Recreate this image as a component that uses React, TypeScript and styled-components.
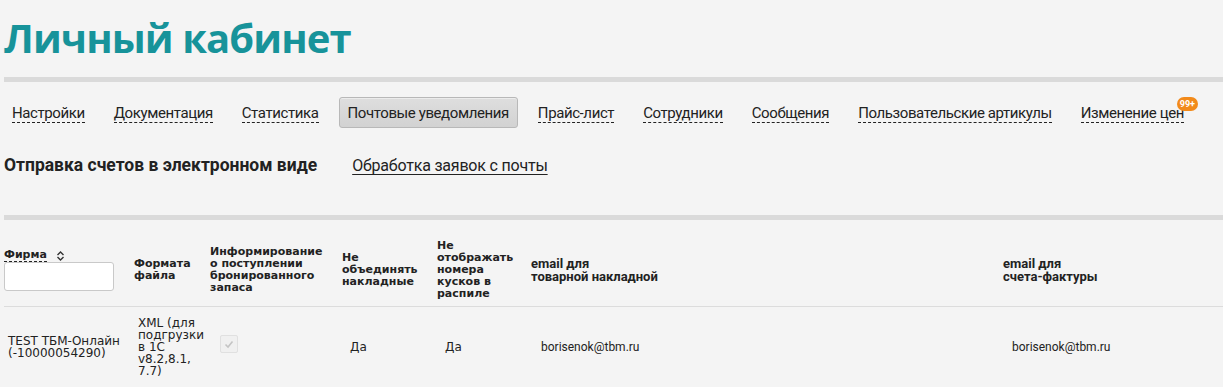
import styled, { createGlobalStyle } from 'styled-components'

const GlobalStyle = createGlobalStyle`
  html, body {
    margin: 0;
    padding: 0;
    background: #f4f4f4;
  }
`

const narrow = 'Roboto, "Liberation Sans Narrow", sans-serif'
const tahoma = '"DejaVu Sans", Tahoma, Verdana, sans-serif'

const Page = styled.div`
  padding: 0 0 0 4px;
  width: 1219px;
  overflow: hidden;
  font-family: ${tahoma};
  color: #222;
`

const Title = styled.h1`
  margin: 0;
  padding-top: 14px;
  height: 63px;
  font-family: "Open Sans", sans-serif;
  font-size: 40px;
  font-weight: 700;
  letter-spacing: -0.9px;
  line-height: 48px;
  color: #17939a;
`

const Divider = styled.div`
  height: 5px;
  background: #dadada;
`

const Nav = styled.nav`
  display: flex;
  align-items: center;
  gap: 11px;
  margin-top: 15px;
  margin-left: -1px;
  font-family: ${narrow};
  font-size: 15px;
  letter-spacing: -0.4px;
  white-space: nowrap;
`

const NavItem = styled.a<{ active?: boolean }>`
  position: relative;
  display: block;
  padding: 7px 8px 6px;
  border: 1px solid ${p => (p.active ? '#b8b8b8' : 'transparent')};
  border-radius: 3px;
  background: ${p => (p.active ? 'linear-gradient(#dedede, #d2d2d2)' : 'transparent')};
  box-shadow: ${p => (p.active ? 'inset 0 1px 0 #ececec' : 'none')};
  color: #222;
  line-height: 16px;
  cursor: pointer;
`

const NavText = styled.span<{ active?: boolean }>`
  border-bottom: 1px dashed ${p => (p.active ? 'transparent' : '#222')};
`

const Badge = styled.span`
  position: absolute;
  top: -1px;
  right: -6px;
  padding: 0 3px;
  height: 14px;
  border-radius: 7px;
  background: #f28a1a;
  color: #fff;
  font-family: ${narrow};
  font-size: 9px;
  font-weight: 700;
  letter-spacing: 0;
  line-height: 14px;
`

const SubNav = styled.div`
  display: flex;
  align-items: baseline;
  gap: 35px;
  margin-top: 27px;
  height: 60px;
  font-family: ${narrow};
  white-space: nowrap;
`

const SubCurrent = styled.span`
  font-size: 17.5px;
  font-weight: 700;
  color: #222;
`

const SubLink = styled.a`
  font-size: 16px;
  letter-spacing: -0.2px;
  color: #222;
  text-decoration: underline;
  text-underline-offset: 3px;
`

const Table = styled.table`
  width: 100%;
  border-collapse: collapse;
  table-layout: fixed;
`

const Th = styled.th<{ narrow?: boolean }>`
  padding: 20px 0 6px;
  text-align: left;
  vertical-align: middle;
  font-family: ${p => (p.narrow ? narrow : tahoma)};
  font-size: ${p => (p.narrow ? '13px' : '11px')};
  font-weight: 700;
  line-height: ${p => (p.narrow ? '13px' : '12px')};
  color: #222;
  border-bottom: 1px solid #dcdcdc;
`

const Td = styled.td<{ narrow?: boolean; pl?: number }>`
  padding: 10px 0 10px ${p => p.pl ?? 4}px;
  vertical-align: middle;
  font-family: ${p => (p.narrow ? narrow : tahoma)};
  font-size: 12px;
  line-height: 12px;
  color: #222;
  border-bottom: 1px solid #dcdcdc;
`

const SortLabel = styled.div`
  display: flex;
  align-items: center;
  gap: 9px;
  height: 12px;
`

const Dashed = styled.span`
  border-bottom: 1px dashed #222;
`

const FilterInput = styled.input`
  display: block;
  box-sizing: border-box;
  width: 110px;
  height: 29px;
  margin: 0;
  border: 1px solid #c9c9c9;
  border-radius: 3px;
  background: #fff;
`

const FakeCheck = styled.span`
  display: block;
  margin: -6px 0 0 6px;
  width: 16px;
  height: 16px;
  border: 1px solid #e0e0e0;
  border-radius: 2px;
  background: #f0f0f0;
`

const cols = [130, 76, 132, 95, 94, 472, 220]

const navItems = [
  'Настройки',
  'Документация',
  'Статистика',
  'Почтовые уведомления',
  'Прайс-лист',
  'Сотрудники',
  'Сообщения',
  'Пользовательские артикулы',
  'Изменение цен',
]

export default function App() {
  return (
    <Page>
      <GlobalStyle />
      <Title>Личный кабинет</Title>
      <Divider />
      <Nav>
        {navItems.map(item => {
          const active = item === 'Почтовые уведомления'
          return (
            <NavItem key={item} active={active}>
              <NavText active={active}>{item}</NavText>
              {item === 'Изменение цен' && <Badge>99+</Badge>}
            </NavItem>
          )
        })}
      </Nav>
      <SubNav>
        <SubCurrent>Отправка счетов в электронном виде</SubCurrent>
        <SubLink>Обработка заявок с почты</SubLink>
      </SubNav>
      <Divider />
      <Table>
        <colgroup>
          {cols.map((w, i) => (
            <col key={i} style={{ width: w }} />
          ))}
        </colgroup>
        <thead>
          <tr>
            <Th>
              <SortLabel>
                <Dashed>Фирма</Dashed>
                <svg width="9" height="10" viewBox="0 0 9 10" fill="none" stroke="#333" strokeWidth="1.4">
                  <path d="M1.5 4 4.5 1 7.5 4" />
                  <path d="M1.5 6 4.5 9 7.5 6" />
                </svg>
              </SortLabel>
              <FilterInput />
            </Th>
            <Th>Формата<br />файла</Th>
            <Th>Информирование<br />о поступлении<br />бронированного<br />запаса</Th>
            <Th>Не<br />объединять<br />накладные</Th>
            <Th>Не<br />отображать<br />номера<br />кусков в<br />распиле</Th>
            <Th narrow>email для<br />товарной накладной</Th>
            <Th narrow>email для<br />счета-фактуры</Th>
          </tr>
        </thead>
        <tbody>
          <tr>
            <Td>TEST ТБМ-Онлайн<br />(-10000054290)</Td>
            <Td>XML (для<br />подгрузки<br />в 1С<br />v8.2,8.1,<br />7.7)</Td>
            <Td>
              <FakeCheck>
                <svg width="16" height="16" viewBox="0 0 16 16" fill="none" stroke="#c4c4c4" strokeWidth="1.6">
                  <path d="M4.5 8.5 7 11 11.5 5.5" />
                </svg>
              </FakeCheck>
            </Td>
            <Td pl={8}>Да</Td>
            <Td pl={8}>Да</Td>
            <Td narrow pl={10}>borisenok@tbm.ru</Td>
            <Td narrow pl={9}>borisenok@tbm.ru</Td>
          </tr>
        </tbody>
      </Table>
    </Page>
  )
}
